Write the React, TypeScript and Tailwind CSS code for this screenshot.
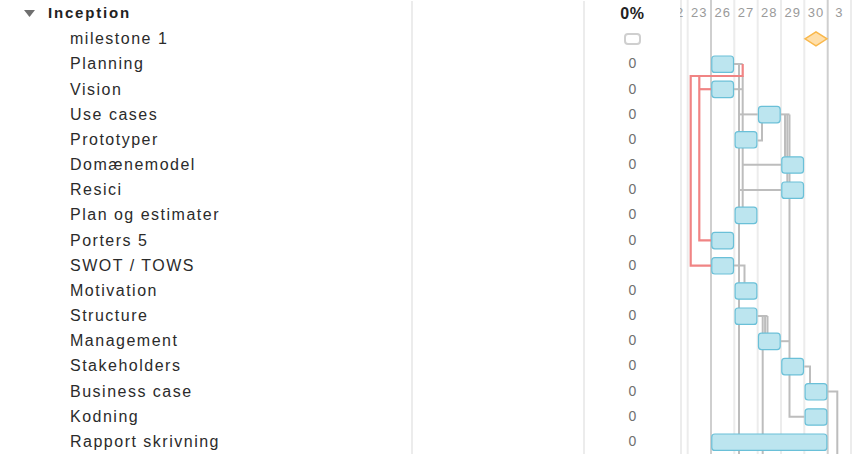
import React from "react";

type Task = { name: string; col?: number; span?: number; milestone?: boolean };

const tasks: Task[] = [
  { name: "milestone 1", col: 6, milestone: true },
  { name: "Planning", col: 2 },
  { name: "Vision", col: 2 },
  { name: "Use cases", col: 4 },
  { name: "Prototyper", col: 3 },
  { name: "Domænemodel", col: 5 },
  { name: "Resici", col: 5 },
  { name: "Plan og estimater", col: 3 },
  { name: "Porters 5", col: 2 },
  { name: "SWOT / TOWS", col: 2 },
  { name: "Motivation", col: 3 },
  { name: "Structure", col: 3 },
  { name: "Management", col: 4 },
  { name: "Stakeholders", col: 5 },
  { name: "Business case", col: 6 },
  { name: "Kodning", col: 6 },
  { name: "Rapport skrivning", col: 2, span: 5 },
];

const days = ["22", "23", "26", "27", "28", "29", "30", "3"];

// gantt geometry in page coordinates (svg viewBox starts at x=680)
const colW = 23.33;
const colLeft = (k: number) => 664.33 + colW * k;
const rowC = (i: number) => 13.6 + 25.2 * i;

const grayLines: string[] = [
  // Planning / Vision trunk
  `734,${rowC(2)} 742.7,${rowC(2)}`,
  `739,${rowC(2)} 739,454`,
  `742.7,76 742.7,207`,
  `734,${rowC(3)} 742.7,${rowC(3)}`,
  `739,${rowC(4)} 757.7,${rowC(4)}`,
  `742.7,${rowC(6)} 781,${rowC(6)}`,
  `739,${rowC(7)} 781,${rowC(7)}`,
  // Use cases
  `781,${rowC(4)} 789.5,${rowC(4)}`,
  `785,${rowC(4)} 785,${rowC(6) - 8}`,
  `787.3,${rowC(4)} 787.3,${rowC(7) - 8}`,
  `789.5,${rowC(4)} 789.5,${rowC(16)} 804.3,${rowC(16)}`,
  `762,${rowC(4) + 8} 762,${rowC(5) + 1} 757.7,${rowC(5) + 1}`,
  // SWOT -> Motivation
  `734,${rowC(10)} 744.5,${rowC(10)} 744.5,${rowC(11) - 8}`,
  // Structure
  `757.7,${rowC(12)} 767.5,${rowC(12)}`,
  `762.7,${rowC(12)} 762.7,454`,
  `765.1,${rowC(12)} 765.1,${rowC(13) - 8}`,
  `767.5,${rowC(12)} 767.5,${rowC(13) - 8}`,
  // Management
  `781,${rowC(13)} 789.5,${rowC(13)}`,
  // Stakeholders -> Business case
  `804.3,${rowC(14)} 810,${rowC(14)} 810,${rowC(15) - 8}`,
  // Business case
  `827.7,${rowC(15)} 837.3,${rowC(15)} 837.3,454`,
];

const redLines: string[] = [
  `742.7,${rowC(2)} 742.7,76 690.7,76 690.7,${rowC(10)} 711,${rowC(10)}`,
  `699.3,76 699.3,${rowC(9)} 711,${rowC(9)}`,
  `699.3,${rowC(3)} 711,${rowC(3)}`,
];

const GanttChart: React.FC = () => {
  const grid = [681, 687.7, 711, 734.3, 757.7, 781, 804.3, 827.7, 851];
  return (
    <svg
      className="absolute inset-0"
      width={174}
      height={454}
      viewBox="680 0 174 454"
    >
      {grid.map((x) => (
        <line
          key={x}
          x1={x}
          x2={x}
          y1={0}
          y2={454}
          stroke={x === 711 || x === 827.7 ? "#cfcfcf" : "#ececec"}
          strokeWidth={2}
        />
      ))}
      {grayLines.map((p, i) => (
        <polyline key={i} points={p} fill="none" stroke="#bdbdbd" strokeWidth={2} />
      ))}
      {redLines.map((p, i) => (
        <polyline key={i} points={p} fill="none" stroke="#f08484" strokeWidth={2.2} />
      ))}
      {tasks.map((t, idx) => {
        const i = idx + 1;
        const c = rowC(i);
        if (t.milestone) {
          const cx = colLeft(t.col!) + colW / 2;
          return (
            <polygon
              key={t.name}
              points={`${cx - 11},${c} ${cx},${c - 7} ${cx + 11},${c} ${cx},${c + 7}`}
              fill="#ffdfaa"
              stroke="#f9b84c"
              strokeWidth={1.5}
            />
          );
        }
        const x = colLeft(t.col!) + 0.8;
        const w = colW * (t.span ?? 1) - 1.6;
        return (
          <rect
            key={t.name}
            x={x}
            y={c - 8}
            width={w}
            height={16.4}
            rx={3}
            fill="#bce5ef"
            stroke="#6ac0d8"
            strokeWidth={1.2}
          />
        );
      })}
    </svg>
  );
};

export default function App() {
  return (
    <div
      className="flex h-[454px] w-[854px] overflow-hidden bg-white text-[#222]"
      style={{ fontFamily: '"Liberation Sans", Arial, sans-serif' }}
    >
      <div className="flex w-[680px] shrink-0 flex-col pt-px">
        <div className="flex h-[25.2px] items-center">
          <div className="flex w-[411px] items-center pl-[24px]">
            <svg width="11" height="8" viewBox="0 0 11 8" className="mr-[13px]">
              <path d="M0 0 H11 L5.5 7 Z" fill="#6f6f6f" />
            </svg>
            <span className="text-[15px] font-bold tracking-[1.8px]">Inception</span>
          </div>
          <div className="h-full w-[172px] border-l-2 border-[#ececec]" />
          <div className="flex h-full w-[97px] items-center justify-center border-l-2 border-[#ececec] text-[16px] font-bold tracking-[0.8px]">
            0%
          </div>
        </div>
        {tasks.map((t) => (
          <div key={t.name} className="flex h-[25.2px] items-center">
            <div className="w-[411px] pl-[70px] pt-px text-[16px] tracking-[1.5px] text-[#2b2b2b]">
              {t.name}
            </div>
            <div className="h-full w-[172px] border-l-2 border-[#ececec]" />
            <div className="flex h-full w-[97px] items-center justify-center border-l-2 border-[#ececec]">
              {t.milestone ? (
                <div className="h-[12px] w-[17px] rounded-[4px] border-2 border-[#cfcfcf]" />
              ) : (
                <span className="text-[14px] text-[#707070]">0</span>
              )}
            </div>
          </div>
        ))}
      </div>
      <div className="relative h-[454px] w-[174px] shrink-0 overflow-hidden">
        <GanttChart />
        <div className="relative -ml-[15.67px] flex h-[25px] items-center">
          {days.map((d) => (
            <div
              key={d}
              className="w-[23.33px] shrink-0 text-center text-[13px] tracking-[1px] text-[#9a9a9a]"
            >
              {d}
            </div>
          ))}
        </div>
      </div>
    </div>
  );
}
